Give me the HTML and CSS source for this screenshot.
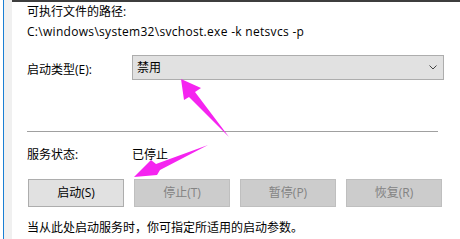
FILE: index.html
```html
<!DOCTYPE html>
<html lang="zh-CN">
<head>
<meta charset="utf-8">
<link rel="stylesheet" href="styles.css">
</head>
<body>
<div class="page">
  <div class="sidebar"></div>
  <div class="main">
    <div class="label">可执行文件的路径:</div>
    <div class="path">C:\windows\system32\svchost.exe -k netsvcs -p</div>
    <div class="row-select">
      <div class="col-label">启动类型(E):</div>
      <div class="select">
        <span>禁用</span>
        <svg class="chev" width="8" height="5" viewBox="0 0 8 5"><path d="M0.5 0.5 L4 4 L7.5 0.5" fill="none" stroke="#444" stroke-width="1"/></svg>
      </div>
    </div>
    <div class="divider"></div>
    <div class="row-status">
      <div class="col-label">服务状态:</div>
      <div>已停止</div>
    </div>
    <div class="buttons">
      <div class="btn">启动(S)</div>
      <div class="btn disabled">停止(T)</div>
      <div class="btn disabled">暂停(P)</div>
      <div class="btn disabled">恢复(R)</div>
    </div>
    <div class="hint">当从此处启动服务时，你可指定所适用的启动参数。</div>
  </div>
  <svg class="arrows" width="460" height="239" viewBox="0 0 460 239">
    <polygon points="181,79 201,88 195,92 229,137 189,97 184,100" fill="#f524f0"/>
    <polygon points="134,177 151,160 156,164 208,145 160,170 157,175" fill="#f524f0"/>
  </svg>
</div>
</body>
</html>
```
FILE: styles.css
```css
html, body {
  margin: 0;
  padding: 0;
  background: #ffffff;
}
.page {
  position: relative;
  width: 460px;
  height: 239px;
  overflow: hidden;
  display: flex;
  font-family: "Open Sans", "Noto Sans CJK SC", sans-serif;
  font-size: 12px;
  color: #000;
}
.sidebar {
  width: 12px;
  flex: none;
  background: linear-gradient(to right, #ffffff 0, #ffffff 3px, #1a7fd4 3px, #1a7fd4 4px, #f0f0f0 4px, #f0f0f0 12px);
}
.main {
  flex: 1;
  border-top: 2px solid #3e3e3e;
  padding: 0 16px 0 15px;
  line-height: 20px;
}
.label, .path {
  height: 20px;
  white-space: nowrap;
}
.path {
  letter-spacing: 0.3px;
}
.row-select {
  display: flex;
  margin-top: 13px;
  height: 25px;
}
.col-label {
  width: 105px;
  flex: none;
}
.row-select .col-label {
  line-height: 25px;
  padding-top: 2px;
}
.select {
  flex: 1;
  box-sizing: border-box;
  height: 25px;
  background: #e1e1e1;
  border: 1px solid #adadad;
  display: flex;
  align-items: center;
  justify-content: space-between;
  padding: 0 6px 0 4px;
  line-height: 22px;
}
.chev {
  display: block;
}
.divider {
  margin-top: 51px;
  margin-right: 6px;
  height: 1px;
  background: #a0a0a0;
}
.row-status {
  display: flex;
  margin-top: 13px;
  height: 20px;
}
.buttons {
  display: flex;
  gap: 10px;
  margin-top: 14px;
  margin-left: 1px;
}
.btn {
  width: 96px;
  height: 28px;
  box-sizing: border-box;
  background: #e1e1e1;
  border: 1px solid #adadad;
  display: flex;
  align-items: center;
  justify-content: center;
}
.btn.disabled {
  background: #cccccc;
  border-color: #bfbfbf;
  color: #838383;
}
.hint {
  margin-top: 11px;
  white-space: nowrap;
}
.arrows {
  position: absolute;
  left: 0;
  top: 0;
  pointer-events: none;
}
```
